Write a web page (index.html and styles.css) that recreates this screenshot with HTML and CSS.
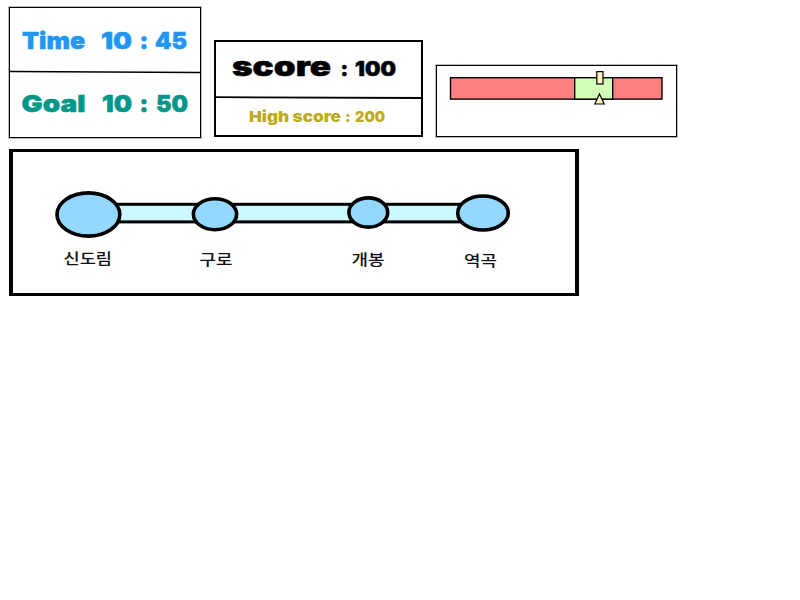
FILE: index.html
```html
<!DOCTYPE html>
<html lang="ko">
<head>
<meta charset="utf-8">
<title>Train</title>
<link rel="stylesheet" href="styles.css">
</head>
<body>
<main class="hud">
  <header class="top">
    <section class="panel clock">
      <svg class="row time" viewBox="10 8 190 64">
        <text x="22" y="49" textLength="63" lengthAdjust="spacingAndGlyphs">Time</text>
        <text x="101" y="49" textLength="31" lengthAdjust="spacingAndGlyphs">10</text>
        <text x="139.5" y="49">:</text>
        <text x="155" y="49" textLength="32" lengthAdjust="spacingAndGlyphs">45</text>
      </svg>
      <svg class="row goal" viewBox="10 72 190 65">
        <path class="rule" d="M10 71.5L200 72.5"/>
        <text x="21.5" y="111.5" textLength="64" lengthAdjust="spacingAndGlyphs">Goal</text>
        <text x="102" y="111.5" textLength="30" lengthAdjust="spacingAndGlyphs">10</text>
        <text x="139.5" y="111.5">:</text>
        <text x="156" y="111.5" textLength="32" lengthAdjust="spacingAndGlyphs">50</text>
      </svg>
    </section>
    <section class="panel score">
      <svg class="row current" viewBox="216 42 205 55">
        <text class="word" x="232" y="76" textLength="99" lengthAdjust="spacingAndGlyphs">score</text>
        <text x="340.5" y="76">:</text>
        <text x="355" y="76" textLength="41" lengthAdjust="spacingAndGlyphs">100</text>
      </svg>
      <svg class="row high" viewBox="216 97 205 38">
        <path class="rule thick" d="M215 97.2L422 98"/>
        <text x="249" y="122" textLength="92" lengthAdjust="spacingAndGlyphs">High score</text>
        <text x="345" y="122">:</text>
        <text x="355" y="122" textLength="30" lengthAdjust="spacingAndGlyphs">200</text>
      </svg>
    </section>
    <section class="panel gauge">
      <svg class="row" viewBox="437 66 239 70">
        <g class="bar">
          <rect class="red" x="450.5" y="77.7" width="211.5" height="21.4"/>
          <rect class="green" x="574.7" y="77.7" width="38" height="21.4"/>
        </g>
        <rect class="pointer" x="596.8" y="71.6" width="6.2" height="12.4"/>
        <path class="pointer" d="M599.5 94L604.2 104H594.8Z"/>
      </svg>
    </section>
  </header>
  <section class="route">
    <svg class="row" viewBox="13 152 562 141">
      <rect class="track" x="100" y="204.3" width="380" height="17.6"/>
      <g class="station">
        <ellipse cx="88.4" cy="214.5" rx="31.4" ry="21.6"/>
        <ellipse cx="215" cy="214.2" rx="21.6" ry="15.5"/>
        <ellipse cx="368.3" cy="212.5" rx="19.4" ry="14.6"/>
        <ellipse cx="483" cy="213" rx="25.3" ry="17"/>
      </g>
      <g class="names">
        <text x="63.5" y="264" textLength="48.5" lengthAdjust="spacingAndGlyphs">신도림</text>
        <text x="199.5" y="265" textLength="33" lengthAdjust="spacingAndGlyphs">구로</text>
        <text x="351.5" y="265" textLength="33" lengthAdjust="spacingAndGlyphs">개봉</text>
        <text x="464" y="266" textLength="33" lengthAdjust="spacingAndGlyphs">역곡</text>
      </g>
    </svg>
  </section>
</main>
</body>
</html>
```
FILE: styles.css
```css
* { box-sizing: border-box; }
body {
  margin: 0;
  background: #fff;
  font-family: Inter, "Liberation Sans", sans-serif;
  font-weight: 900;
}
.hud { padding: 7px 0 0 9px; }
.top {
  display: flex;
  align-items: flex-end;
  height: 131px;
}
.panel {
  display: flex;
  flex-direction: column;
  border: 1px solid #000;
  box-shadow: 0 0 0 1px #0004;
}
.row { display: block; width: 100%; overflow: visible; }
.clock { width: 192px; height: 131px; }
.time { height: 64px; fill: #2196f3; font-size: 23.5px; }
.goal { height: 65px; fill: #009688; font-size: 23.5px; }
.clock text { stroke-width: 0.5; }
.time text { stroke: #2196f3; }
.goal text { stroke: #009688; }
.rule { stroke: #000; stroke-width: 1.3; }
.thick { stroke-width: 1.8; }
.score {
  width: 209px;
  height: 97px;
  margin: 0 0 1px 13px;
  border-width: 2px;
  box-shadow: none;
}
.current { height: 55px; fill: #000; font-size: 20.5px; }
.current text { stroke: #000; stroke-width: 0.5; }
.current .word { font-size: 27px; }
.high { height: 38px; fill: #bcab20; font-size: 15px; }
.gauge {
  width: 241px;
  height: 72px;
  margin: 0 0 1px 13px;
}
.gauge .row { height: 70px; }
.bar rect { stroke: #000; stroke-width: 1.4; }
.red { fill: #ff8080; }
.green { fill: #d4ffb8; }
.pointer { fill: #fff5bd; stroke: #000; stroke-width: 1.2; }
.route {
  width: 570px;
  height: 147px;
  margin-top: 11px;
  border: solid #000;
  border-width: 3px 4px;
}
.route .row { height: 141px; }
.track { fill: #ccf9ff; stroke: #000; stroke-width: 3; }
.station { fill: #94d7ff; stroke: #000; stroke-width: 3.6; }
.names {
  fill: #111;
  font: 500 14.5px "Noto Sans CJK KR", sans-serif;
}
```
